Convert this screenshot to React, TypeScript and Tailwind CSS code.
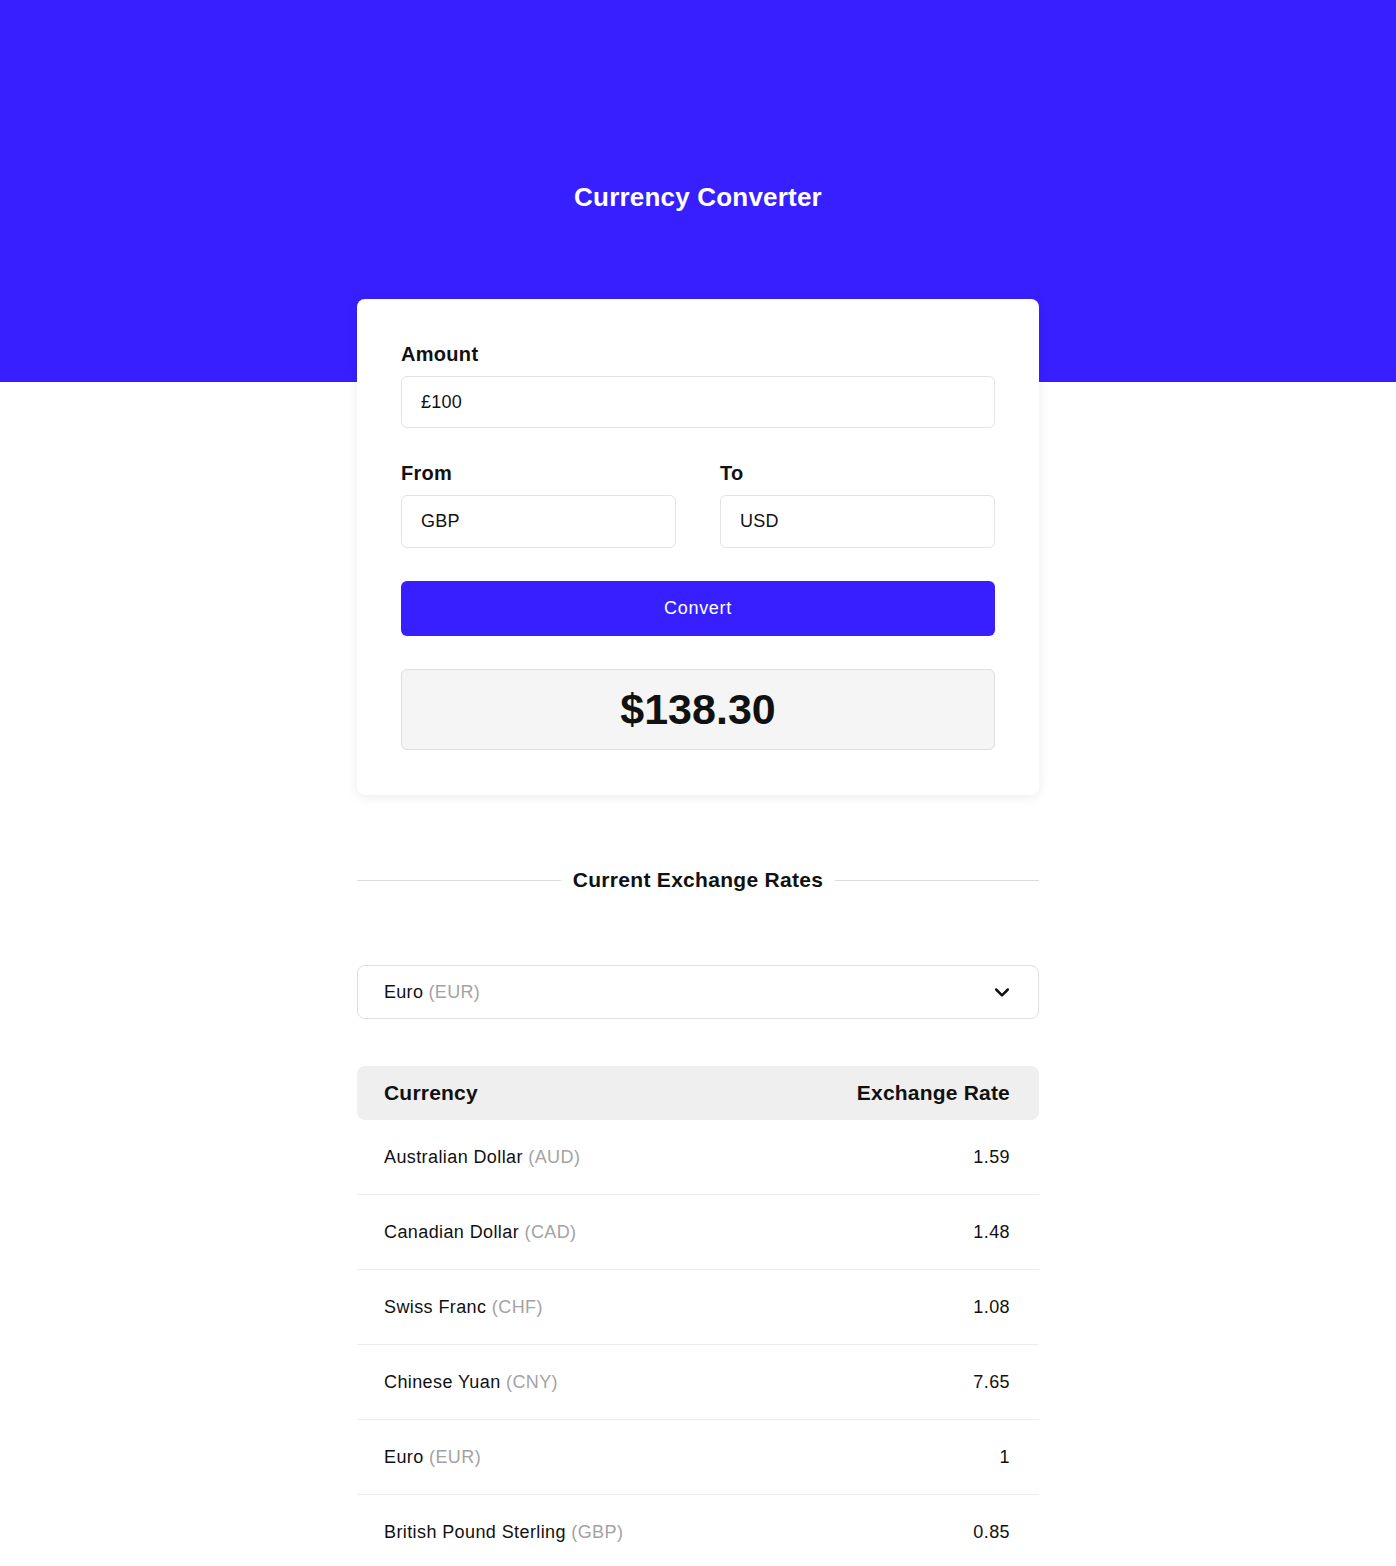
import React from "react";

const rates = [
  { name: "Australian Dollar", code: "AUD", rate: "1.59" },
  { name: "Canadian Dollar", code: "CAD", rate: "1.48" },
  { name: "Swiss Franc", code: "CHF", rate: "1.08" },
  { name: "Chinese Yuan", code: "CNY", rate: "7.65" },
  { name: "Euro", code: "EUR", rate: "1" },
  { name: "British Pound Sterling", code: "GBP", rate: "0.85" },
];

export default function App() {
  return (
    <div className="min-h-screen bg-white text-[#111]" style={{ fontFamily: '"Liberation Sans", Arial, sans-serif' }}>
      <div className="bg-[#371fff] h-[382px] flex justify-center">
        <h1 className="mt-[181px] text-[26px] leading-[32px] font-semibold text-white tracking-[0.2px]">Currency Converter</h1>
      </div>
      <div className="w-[682px] mx-auto -mt-[83px] relative">
        <div className="bg-white rounded-[8px] shadow-[0_2px_12px_rgba(0,0,0,0.08)] px-[44px] pt-[42px] pb-[45px]">
          <label className="block text-[20px] leading-[26px] font-semibold mb-[9px] tracking-[0.3px]">Amount</label>
          <div className="h-[52px] border border-[#e3e3e3] rounded-[6px] flex items-center px-[19px] text-[18px] tracking-[0.2px]">£100</div>
          <div className="grid grid-cols-2 gap-[44px] mt-[32px]">
            <div>
              <label className="block text-[20px] leading-[26px] font-semibold mb-[9px] tracking-[0.3px]">From</label>
              <div className="h-[53px] border border-[#e3e3e3] rounded-[6px] flex items-center px-[19px] text-[18px] tracking-[0.3px]">GBP</div>
            </div>
            <div>
              <label className="block text-[20px] leading-[26px] font-semibold mb-[9px] tracking-[0.3px]">To</label>
              <div className="h-[53px] border border-[#e3e3e3] rounded-[6px] flex items-center px-[19px] text-[18px] tracking-[0.3px]">USD</div>
            </div>
          </div>
          <button className="mt-[33px] w-full h-[55px] bg-[#371fff] rounded-[6px] text-white text-[18px] font-medium tracking-[0.7px]">Convert</button>
          <div className="mt-[33px] h-[81px] bg-[#f5f5f5] border border-[#dedede] rounded-[6px] flex items-center justify-center text-[43px] font-bold">$138.30</div>
        </div>

        <div className="flex items-center mt-[71px] gap-[12px]">
          <div className="flex-1 h-px bg-[#dcdcdc]" />
          <h2 className="text-[21px] leading-[28px] font-semibold tracking-[0.3px]">Current Exchange Rates</h2>
          <div className="flex-1 h-px bg-[#dcdcdc]" />
        </div>

        <div className="mt-[71px] h-[54px] border border-[#e0e0e0] rounded-[8px] flex items-center justify-between pl-[26px] pr-[26px] text-[18px] tracking-[0.3px]">
          <span>Euro <span className="text-[#a3a3a3]">(EUR)</span></span>
          <svg width="20" height="20" viewBox="0 0 24 24" fill="none" stroke="#111" strokeWidth="3" strokeLinecap="round" strokeLinejoin="round"><path d="M5 9l7 7 7-7" /></svg>
        </div>

        <div className="mt-[47px]">
          <div className="h-[54px] bg-[#efefef] rounded-[8px] flex items-center justify-between pl-[27px] pr-[29px] text-[21px] font-semibold tracking-[0.2px]">
            <span>Currency</span>
            <span>Exchange Rate</span>
          </div>
          {rates.map((r, i) => (
            <div key={r.code} className={"h-[75px] flex items-center justify-between pl-[27px] pr-[29px] text-[18px] tracking-[0.4px] " + (i < rates.length - 1 ? "border-b border-[#ececec]" : "")}>
              <span>{r.name} <span className="text-[#a3a3a3]">({r.code})</span></span>
              <span>{r.rate}</span>
            </div>
          ))}
        </div>
      </div>
    </div>
  );
}
